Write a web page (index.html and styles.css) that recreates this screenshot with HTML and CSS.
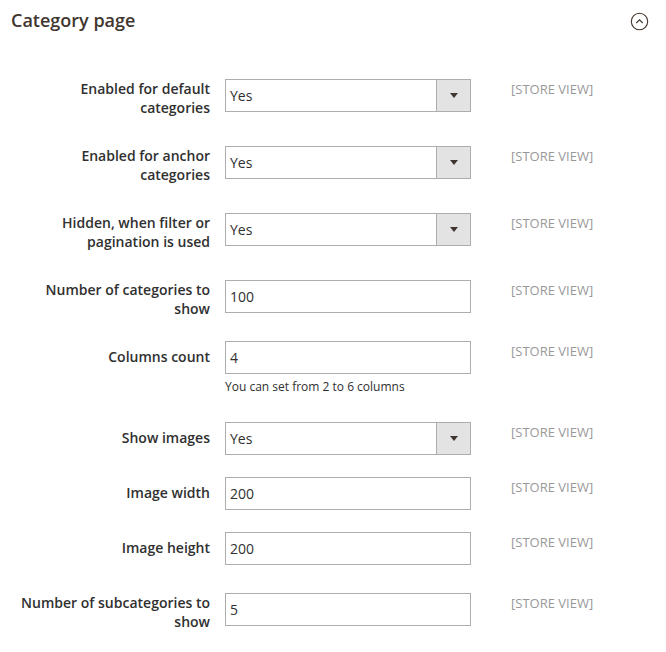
FILE: index.html
```html
<!DOCTYPE html>
<html lang="en">
<head>
    <meta charset="UTF-8">
    <title>Category page</title>
    <link rel="stylesheet" href="styles.css">
</head>
<body>
    <div class="section">
        <div class="section-head">
            <h2 class="section-title">Category page</h2>
            <span class="collapse-icon">
                <svg width="19" height="19" viewBox="0 0 19 19">
                    <circle cx="9.5" cy="9.5" r="8.2" fill="none" stroke="#41362f" stroke-width="1.1"/>
                    <path d="M6.3 11 L9.5 7.8 L12.7 11" fill="none" stroke="#41362f" stroke-width="1.1"/>
                </svg>
            </span>
        </div>

        <div class="fields">
            <div class="field tall">
                <label class="field-label">Enabled for default categories</label>
                <div class="control">
                    <div class="select"><span>Yes</span><span class="select-btn"></span></div>
                </div>
                <div class="scope">[STORE VIEW]</div>
            </div>

            <div class="field tall">
                <label class="field-label">Enabled for anchor categories</label>
                <div class="control">
                    <div class="select"><span>Yes</span><span class="select-btn"></span></div>
                </div>
                <div class="scope">[STORE VIEW]</div>
            </div>

            <div class="field tall">
                <label class="field-label">Hidden, when filter or pagination is used</label>
                <div class="control">
                    <div class="select"><span>Yes</span><span class="select-btn"></span></div>
                </div>
                <div class="scope">[STORE VIEW]</div>
            </div>

            <div class="field mid">
                <label class="field-label">Number of categories to show</label>
                <div class="control">
                    <div class="input">100</div>
                </div>
                <div class="scope">[STORE VIEW]</div>
            </div>

            <div class="field noted single">
                <label class="field-label">Columns count</label>
                <div class="control">
                    <div class="input">4</div>
                    <div class="note">You can set from 2 to 6 columns</div>
                </div>
                <div class="scope">[STORE VIEW]</div>
            </div>

            <div class="field short single">
                <label class="field-label">Show images</label>
                <div class="control">
                    <div class="select"><span>Yes</span><span class="select-btn"></span></div>
                </div>
                <div class="scope">[STORE VIEW]</div>
            </div>

            <div class="field short single">
                <label class="field-label">Image width</label>
                <div class="control">
                    <div class="input">200</div>
                </div>
                <div class="scope">[STORE VIEW]</div>
            </div>

            <div class="field mid single">
                <label class="field-label">Image height</label>
                <div class="control">
                    <div class="input">200</div>
                </div>
                <div class="scope">[STORE VIEW]</div>
            </div>

            <div class="field">
                <label class="field-label">Number of subcategories to show</label>
                <div class="control">
                    <div class="input">5</div>
                </div>
                <div class="scope">[STORE VIEW]</div>
            </div>
        </div>
    </div>
</body>
</html>
```

FILE: styles.css
```css
body {
    font-family: "Open Sans", sans-serif;
    color: #303030;
    background-color: #fff;
    margin: 0;
    padding: 0;
}
.section {
    width: 666px;
}
.section-head {
    display: flex;
    justify-content: space-between;
    align-items: center;
    padding: 8px 17px 0 11px;
    height: 24px;
}
.section-title {
    margin: 0;
    font-size: 18px;
    font-weight: 600;
    color: #41362f;
    line-height: 24px;
}
.collapse-icon {
    display: flex;
    margin-top: 2px;
}
.fields {
    padding-top: 47px;
}
.field {
    display: grid;
    grid-template-columns: 210px 246px auto;
    column-gap: 15px;
    align-items: start;
}
.field.tall {
    height: 67px;
}
.field.mid {
    height: 61px;
}
.field.short {
    height: 55px;
}
.field.noted {
    height: 81px;
}
.field-label {
    box-sizing: border-box;
    text-align: right;
    font-size: 14px;
    font-weight: 600;
    line-height: 19px;
    padding-top: 0;
    padding-left: 18px;
}
.field.single .field-label {
    padding-top: 6px;
}
.select,
.input {
    box-sizing: border-box;
    height: 33px;
    border: 1px solid #adadad;
    background-color: #fff;
    font-size: 14px;
    line-height: 31px;
    padding-left: 4px;
}
.select {
    display: flex;
    justify-content: space-between;
    padding-right: 0;
}
.select-btn {
    width: 33px;
    border-left: 1px solid #adadad;
    background-color: #e3e3e3;
    position: relative;
}
.select-btn::after {
    content: "";
    position: absolute;
    left: 13px;
    top: 13px;
    border-left: 4px solid transparent;
    border-right: 4px solid transparent;
    border-top: 5px solid #41362f;
}
.note {
    font-size: 12px;
    line-height: 16px;
    margin-top: 5px;
}
.scope {
    font-size: 13px;
    color: #999;
    line-height: 18px;
    padding-left: 25px;
    padding-top: 1px;
    text-transform: uppercase;
}
```
